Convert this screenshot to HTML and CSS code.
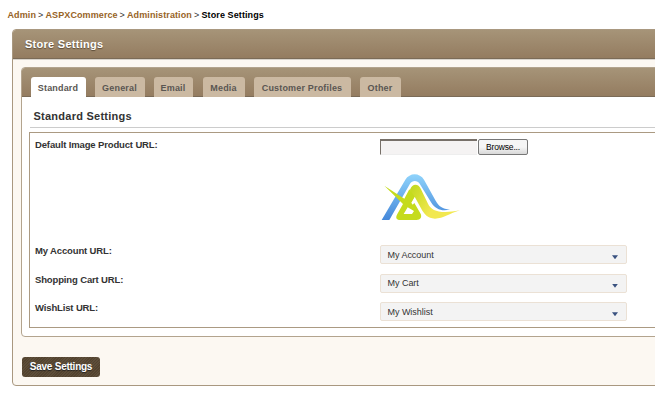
FILE: index.html
```html
<!DOCTYPE html>
<html lang="en">
<head>
<meta charset="utf-8">
<title>Store Settings</title>
<link rel="stylesheet" href="styles.css">
</head>
<body>
<nav class="crumbs"><a class="c1">Admin</a><i>&gt;</i><a class="c2">ASPXCommerce</a><i>&gt;</i><a class="c3">Administration</a><i>&gt;</i><b>Store Settings</b></nav>
<main class="panel">
  <h1 class="bar panel-title">Store Settings</h1>
  <section class="inner">
    <div class="bar tabs">
      <a class="tab active t1">Standard</a><a class="tab t2">General</a><a class="tab t3">Email</a><a class="tab t4">Media</a><a class="tab t5">Customer Profiles</a><a class="tab t6">Other</a>
    </div>
    <h2 class="heading"><span>Standard Settings</span></h2>
    <div class="form">
      <div class="row image-row">
        <label>Default Image Product URL:</label>
        <div>
          <div class="file"><span class="file-box"></span><button class="browse">Browse...</button></div>
          <svg class="logo" viewBox="15 12 240 150">
            <defs>
              <linearGradient id="blue" x1="0" y1="0" x2="0" y2="1"><stop offset="0" stop-color="#8fd3fb"/><stop offset="1" stop-color="#4588da"/></linearGradient>
              <linearGradient id="green" gradientUnits="userSpaceOnUse" x1="100" y1="60" x2="180" y2="110"><stop offset="0" stop-color="#c0d91c"/><stop offset=".4" stop-color="#d3de30"/><stop offset="1" stop-color="#f2e850"/></linearGradient>
            </defs>
            <path fill="url(#blue)" d="M20 156L91 35C104 13 134 13 147 35L182 98C192 115 202 123 225 124C202 132 181 123 169 104L134 47C127 36 112 36 105 47L43 156Z"/>
            <path fill="url(#green)" d="M105 65C112 46 130 46 138 64L159 107C170 130 197 138 255 127C224 136 205 152 180 152C158 152 146 137 138 121L119 86L108 103Z"/>
            <path fill="#c5db1d" fill-rule="evenodd" d="M28 53L88 92L103 64L119 86L109 104L113 110L118 105L136 136C142 147 137 156 124 156H76C63 156 61 149 67 138L84 108ZM98 118L86 138H111L117 129Z"/>
          </svg>
        </div>
      </div>
      <div class="row"><label>My Account URL:</label><div class="select"><span>My Account</span><i></i></div></div>
      <div class="row"><label>Shopping Cart URL:</label><div class="select"><span>My Cart</span><i></i></div></div>
      <div class="row"><label>WishList URL:</label><div class="select"><span>My Wishlist</span><i></i></div></div>
    </div>
  </section>
  <button class="save">Save Settings</button>
</main>
</body>
</html>
```
FILE: styles.css
```css
* { box-sizing: border-box; }
html, body { height: 100%; }
body { margin: 0; overflow: hidden; background: #fff; font: 9px/12px "Liberation Sans", Arial, sans-serif; color: #333; }
.crumbs { height: 29px; padding: 9px 0 0 7.5px; display: flex; font-weight: bold; white-space: nowrap; letter-spacing: .1px; }
.crumbs a { color: #976326; }
.crumbs b { color: #000; letter-spacing: .1px; }
.crumbs i { width: 9px; padding-left: 1.5px; font-style: normal; font-weight: normal; }
.c1 { width: 29px; }
.c2 { width: 72.5px; }
.c3 { width: 65.5px; }
.panel { width: 660px; height: 357px; margin-left: 12px; border: 1px solid #a99880; border-radius: 4px; background: #fcf8f2; overflow: hidden; }
.bar { background: linear-gradient(#a69478, #947c60); border-top: 1px solid #b09c7c; border-bottom: 1px solid #7b6b57; margin: 0; }
.panel-title { height: 30px; margin-top: -1px; padding: 7px 0 0 12px; font-size: 11px; line-height: 14px; letter-spacing: .28px; color: #fff; text-shadow: 0 1px 1px #5b4b38; box-shadow: 0 1px #d8d3cb; }
.inner { width: 652px; height: 270px; margin: 8px 0 0 7.5px; border: 1px solid #b3a48e; border-radius: 4px; background: #fff; overflow: hidden; }
.tabs { height: 30px; margin-top: -1px; padding: 9px 0 0 9px; display: flex; gap: 9px; }
.tab { height: 20px; flex: none; border-radius: 3px 3px 0 0; background: #cbb9a2; color: #5a5652; text-align: center; font-weight: bold; line-height: 22px; letter-spacing: .18px; }
.active { background: #fff; }
.t1 { width: 55px; }
.t2 { width: 50px; }
.t3 { width: 39px; margin-right: 1px; }
.t4 { width: 42px; }
.t5 { width: 97px; }
.t6 { width: 41px; }
.heading { height: 31px; margin: 0 0 0 8px; padding: 12px 0 0 4px; border-bottom: 1px solid #ccc; font-size: 11px; line-height: 14px; letter-spacing: .25px; }
.form { height: 196px; margin: 4px 0 0 7.5px; border: 1px solid #ab9a82; padding: 0 0 0 5px; }
.row { display: grid; grid-template-columns: 345px 247px; height: 28.5px; }
.row label { font-weight: bold; font-size: 9.5px; line-height: 12px; letter-spacing: -.14px; }
.image-row { height: 112.3px; padding-top: 6px; }
.file { display: flex; height: 16px; gap: 1px; }
.file-box { width: 97px; height: 16px; background: #f5f3f3; border: solid #777069; border-width: 2px 0 0 1px; border-bottom: 1px solid #eee; }
.browse { width: 50px; height: 16px; padding: 0; border: 1px solid #777; border-radius: 2px; background: linear-gradient(#f5f5f5 50%, #d8d8d8); font: 8.5px/14px "Liberation Sans", Arial, sans-serif; letter-spacing: -.15px; color: #000; }
.logo { display: block; width: 80px; height: 50px; margin-top: 17px; }
.select { height: 19px; border: 1px solid #ebe1d5; border-radius: 2px; background: #f3f3f3; display: flex; justify-content: space-between; padding: 2.5px 8px 0 6.5px; letter-spacing: -.03px; }
.select i { width: 6px; height: 4px; margin-top: 6.5px; background: #3a5280; clip-path: polygon(0 0, 100% 0, 50% 100%); }
.save { display: block; width: 78px; height: 20px; margin: 20px 0 0 9px; padding: 0; border: 0; border-radius: 3px; background: repeating-linear-gradient(135deg, #53432f 0 1px, #5d4e3a 1px 2px); color: #fff; font: bold 10px/20px "Liberation Sans", Arial, sans-serif; letter-spacing: -.25px; text-shadow: 0 1px 1px #222; }
```
